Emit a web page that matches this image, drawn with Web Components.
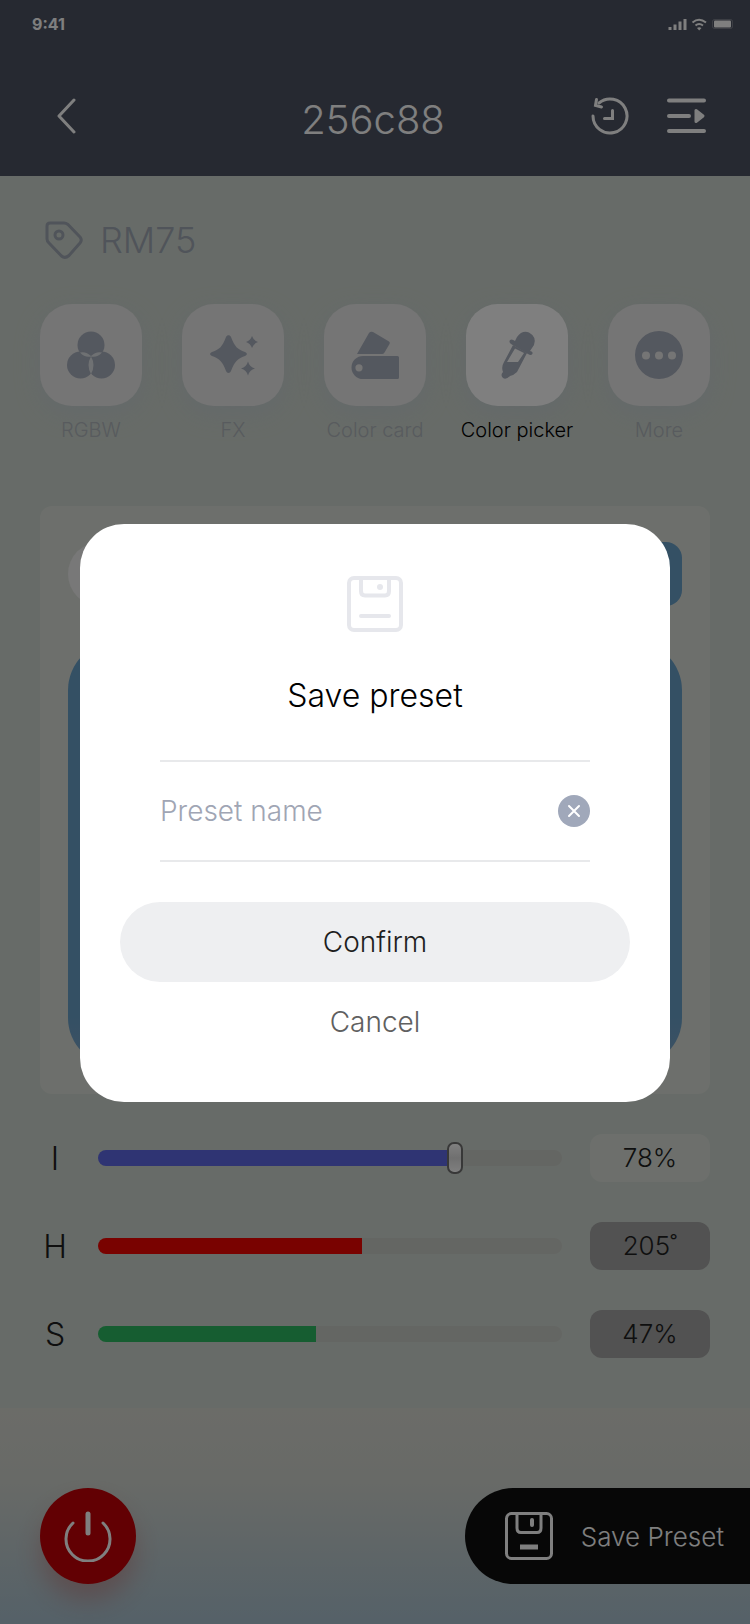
<!DOCTYPE html>
<html lang="en">
<head>
<meta charset="utf-8">
<meta name="viewport" content="width=device-width, initial-scale=1">
<title>Color picker</title>
<style>
  body {
    margin: 0;
    font-family: Inter, "Liberation Sans", sans-serif;
    font-weight: 300;
    color: #1e1e1e;
  }
</style>
</head>
<body>
<light-app>
  <app-header slot="header" time="9:41">256c88</app-header>
  <device-tag>RM75</device-tag>
  <tool-bar>
    <tool-button icon="rgbw">RGBW</tool-button>
    <tool-button icon="fx">FX</tool-button>
    <tool-button icon="card">Color card</tool-button>
    <tool-button icon="picker" active>Color picker</tool-button>
    <tool-button icon="more">More</tool-button>
  </tool-bar>
  <color-panel></color-panel>
  <slider-group>
    <value-slider label="I" value="78" max="100" unit="%" color="#5e68e6" active></value-slider>
    <value-slider label="H" value="205" max="360" unit="˚" color="#f20400"></value-slider>
    <value-slider label="S" value="47" max="100" unit="%" color="#2cba62"></value-slider>
  </slider-group>
  <app-footer slot="footer">Save Preset</app-footer>
  <preset-dialog slot="dialog" placeholder="Preset name">Save preset</preset-dialog>
</light-app>

<script>
const icons = {
  rgbw: `
    <circle cx="24" cy="14" r="13.5"/>
    <circle cx="13.500" cy="34" r="13.500"/>
    <circle cx="34.500" cy="34" r="13.500"/>
    <path d="M13 21.500Q19 20 24 25Q29 20 35 21.500Q30 27 24 25.500Q18 27 13 21.500ZM24 25.500Q29 34 24 43Q19 34 24 25.500Z" fill="#dfe3e6"/>`,
  fx: `
    <path d="M17 6C18 3.500 21 3.500 22 6C26 16 28 18 36 21C38.500 22 38.500 24 36 25C28 28 26 30 22 40C21 42.500 18 42.500 17 40C13 30 11 28 3 25C.5 24 .5 22 3 21C11 18 13 16 17 6Z"/>
    <path d="M43 5Q44.500 9.500 49 11Q44.500 12.500 43 17Q41.500 12.500 37 11Q41.500 9.500 43 5ZM39 30.500Q40.500 36 46 37.500Q40.500 39 39 44.500Q37.500 39 32 37.500Q37.500 36 39 30.500Z"/>`,
  card: `
    <path d="M6 23L18 2Q19.500 0 22 1L38 10.500Q39.500 11.500 38.500 13L33.500 21.500Q32.500 23 31 23Z"/>
    <path fill-rule="evenodd" d="M12 25H46.500Q48 25 48 26.500V46.500Q48 48 46.500 48H12A11.500 11.500 0 0 1 12 25ZM8 33.200A3.600 3.600 0 1 0 8 40.400A3.600 3.600 0 1 0 8 33.200Z"/>`,
  picker: `
    <path d="M24 6Q29-1 36 1.500Q44 6 41 14L37 20Q41 21 39 23.500Q37.500 24.500 35 23L18 13Q15.500 11 17 9Q19 7.500 22 10Z"/>
    <path fill-rule="evenodd" d="M20 14L34 22L24 41Q21 44 17 45Q13 49 10 47Q7 44 10 41Q8 36 11 31ZM22 17.500L14 31H25L31 22Z"/>`,
  more: `
    <path fill-rule="evenodd" d="M24 0A24 24 0 1 0 24 48A24 24 0 1 0 24 0ZM11 20.500A4 4 0 1 1 11 28.500A4 4 0 1 1 11 20.500ZM24 20.500A4 4 0 1 1 24 28.500A4 4 0 1 1 24 20.500ZM37 20.500A4 4 0 1 1 37 28.500A4 4 0 1 1 37 20.500Z"/>`
};

function define(name, render) {
  customElements.define(name, class extends HTMLElement {
    constructor() {
      super();
      this.attachShadow({ mode: "open" });
    }
    connectedCallback() {
      const template = document.createElement("template");
      template.innerHTML = render(this);
      this.shadowRoot.replaceChildren(template.content.cloneNode(true));
    }
  });
}

define("light-app", () => `
  <style>
    :host {
      display: flex;
      flex-direction: column;
      min-height: 100vh;
      position: relative;
      background: #cfd7d0;
    }
    main {
      display: flex;
      flex-direction: column;
      padding: 40px 40px 0;
    }
    footer { margin-top: auto; }
  </style>
  <slot name="header"></slot>
  <main><slot></slot></main>
  <footer><slot name="footer"></slot></footer>
  <slot name="dialog"></slot>
`);

define("app-header", (el) => `
  <style>
    :host { display: block; background: #4c5262; color: #fff; }
    .status {
      display: flex;
      justify-content: space-between;
      align-items: center;
      height: 48px;
      padding: 0 16px 0 32px;
      font-size: 16px;
      font-weight: 700;
    }
    nav {
      display: grid;
      grid-template-columns: 1fr auto 1fr;
      align-items: center;
      height: 120px;
      padding: 8px 44px 0 40px;
    }
    h1 { margin: 8px 0 0; font-size: 40px; line-height: 48px; font-weight: 300; }
    button {
      display: flex;
      padding: 0;
      border: 0;
      background: none;
      color: inherit;
    }
    .back { padding-left: 15px; }
    .actions { display: flex; justify-content: flex-end; gap: 36px; }
    svg { fill: none; stroke: currentColor; stroke-width: 4; }
  </style>
  <header>
    <div class="status">
      <time>${el.getAttribute("time")}</time>
      <svg width="68" height="14" viewBox="0 0 68 14" role="img" aria-label="Signal, Wi-Fi, battery">
        <path d="M4 13V10M9 13V7.500M14 13V4.500M19 13V2" stroke-width="3"/>
        <path d="M26.500 5.500Q33 0 40 5.500M29.500 8.500Q33 5.500 37 8.500" stroke-width="2"/>
        <path d="M31 11Q33 9.500 35.500 11L33.200 13.500Z" fill="currentColor" stroke="none"/>
        <rect x="46.500" y="2.500" width="20" height="9" rx="2" stroke-width="1" opacity=".25"/>
        <rect x="48" y="3.500" width="17" height="7" rx="1" fill="currentColor" stroke="none"/>
      </svg>
    </div>
    <nav>
      <button class="back" aria-label="Back">
        <svg width="24" height="36" viewBox="0 0 24 36">
          <path d="M19 2L4 18L19 34" stroke-width="3" stroke-linecap="round" stroke-linejoin="round"/>
        </svg>
      </button>
      <h1><slot></slot></h1>
      <div class="actions">
        <button aria-label="History">
          <svg width="40" height="40" viewBox="0 0 40 40" stroke-linecap="round">
            <path d="M3 20A17 17 0 1 0 9 7" stroke-width="3"/>
            <path d="M6.500 3.500L5.500 9.500L11.500 11M22.500 14.500V22.500H14.500" stroke-width="3"/>
          </svg>
        </button>
        <button aria-label="Sequence">
          <svg width="40" height="40" viewBox="0 0 40 40" stroke-linecap="round">
            <path d="M3 4.500H38M3 20H23M3 35H38"/>
            <path d="M30 14.500V25.500L37 20Z" fill="currentColor" stroke-width="3" stroke-linejoin="round"/>
          </svg>
        </button>
      </div>
    </nav>
  </header>
`);

define("device-tag", () => `
  <style>
    :host {
      display: flex;
      align-items: center;
      gap: 16px;
      height: 48px;
      padding-left: 4px;
      color: #a0a8b4;
      font-size: 36px;
    }
  </style>
  <svg width="40" height="40" viewBox="0 0 40 40" fill="none" stroke="currentColor" stroke-width="3" stroke-linejoin="round" aria-hidden="true">
    <path d="M6 3H20Q22 3 24 4.500L36 17Q38.500 20 36 23L25 35.500Q21 39 17.500 36L5 23Q3 21 3 19V6Q3 3 6 3Z"/>
    <circle cx="15" cy="15" r="4"/>
  </svg>
  <span><slot></slot></span>
`);

define("tool-bar", () => `
  <style>
    :host { display: flex; justify-content: space-between; margin-top: 40px; }
  </style>
  <slot></slot>
`);

define("tool-button", (el) => `
  <style>
    :host { display: block; width: 102px; }
    button {
      display: flex;
      flex-direction: column;
      align-items: center;
      gap: 12px;
      width: 100%;
      padding: 0;
      border: 0;
      background: none;
      color: #b0b6bc;
      font: inherit;
      font-size: 20px;
      line-height: 24px;
      white-space: nowrap;
    }
    .tile {
      display: grid;
      place-items: center;
      width: 102px;
      height: 102px;
      border-radius: 32px;
      background: #eaeaea;
      box-shadow: 0 8px 24px rgba(190, 204, 224, .35);
      color: #a9b0be;
    }
    :host([active]) button { color: #000; }
    :host([active]) .tile { background: #fff; }
    svg { overflow: visible; }
  </style>
  <button aria-pressed="${el.hasAttribute("active")}">
    <span class="tile">
      <svg width="48" height="48" viewBox="0 0 48 48" fill="currentColor" aria-hidden="true">${icons[el.getAttribute("icon")]}</svg>
    </span>
    <span><slot></slot></span>
  </button>
`);

define("color-panel", () => `
  <style>
    :host {
      display: flex;
      flex-direction: column;
      gap: 36px;
      height: 588px;
      margin-top: 64px;
      padding: 36px 28px 28px;
      box-sizing: border-box;
      border-radius: 12px;
      background: #dbdfd8;
    }
    .top { display: flex; justify-content: space-between; }
    .dot { width: 64px; height: 64px; border-radius: 32px; background: #f0f0f0; }
    .swatch { width: 120px; height: 64px; border-radius: 16px; background: #68a0c8; }
    .preview {
      flex: 1;
      border-radius: 48px;
      background: linear-gradient(#68a0c8 88%, #7ca4c8);
    }
  </style>
  <div class="top">
    <div class="dot"></div>
    <div class="swatch"></div>
  </div>
  <div class="preview"></div>
`);

define("slider-group", () => `
  <style>
    :host { display: flex; flex-direction: column; gap: 40px; margin-top: 40px; }
  </style>
  <slot></slot>
`);

define("value-slider", (el) => {
  const value = el.getAttribute("value");
  const max = el.getAttribute("max");
  const unit = el.getAttribute("unit");
  return `
  <style>
    :host {
      display: flex;
      align-items: center;
      height: 48px;
      --fill: ${value / max * 100}%;
      --color: ${el.getAttribute("color")};
    }
    label { width: 30px; text-align: center; font-size: 32px; }
    input {
      flex: 1;
      min-width: 0;
      height: 32px;
      margin: 0 28px;
      appearance: none;
      background: none;
    }
    input::-webkit-slider-runnable-track {
      height: 16px;
      border-radius: 8px;
      background: linear-gradient(to right, var(--color) var(--fill), #c9ccc6 var(--fill));
    }
    input::-webkit-slider-thumb {
      appearance: none;
      width: 0;
      height: 32px;
      margin-top: -8px;
    }
    :host([active]) input::-webkit-slider-thumb {
      width: 16px;
      box-sizing: border-box;
      border: 2px solid #707070;
      border-radius: 7px;
      background: linear-gradient(#fff, #e0e0e0 50%, #fff);
    }
    output {
      width: 120px;
      border-radius: 12px;
      background: #a4a4a4;
      text-align: center;
      font-size: 26px;
      line-height: 48px;
    }
    :host([active]) output { background: #dadfd9; }
  </style>
  <label for="range">${el.getAttribute("label")}</label>
  <input id="range" type="range" min="0" max="${max}" value="${value}">
  <output for="range">${value}${unit}</output>
`;
});

define("app-footer", () => `
  <style>
    :host {
      display: flex;
      justify-content: space-between;
      align-items: flex-start;
      padding: 80px 0 40px 40px;
      background: linear-gradient(#d7d8d1, #d0d4ce 35%, #aac2d0);
    }
    button { border: 0; color: #fff; font: inherit; }
    .power {
      display: grid;
      place-items: center;
      width: 96px;
      height: 96px;
      padding: 0;
      border-radius: 48px;
      background: #c40006;
      box-shadow: 0 16px 24px rgba(196, 60, 50, .3);
    }
    .save {
      display: flex;
      align-items: center;
      gap: 28px;
      height: 96px;
      padding: 0 26px 0 40px;
      border-radius: 48px 0 0 48px;
      background: #0e0e0e;
      font-size: 26px;
    }
  </style>
  <button class="power" aria-label="Power">
    <svg width="48" height="52" viewBox="0 0 48 52" fill="none" stroke="currentColor" stroke-linecap="round">
      <path d="M9 13A22 22 0 1 0 39 13" stroke-width="3"/>
      <path d="M24 4V23" stroke-width="5"/>
    </svg>
  </button>
  <button class="save">
    <svg width="48" height="48" viewBox="0 0 48 48" fill="none" stroke="currentColor" stroke-width="3" aria-hidden="true">
      <rect x="1.500" y="1.500" width="45" height="45" rx="5"/>
      <path d="M12 2V16Q12 20.500 16 20.500H32Q36 20.500 36 16V2"/>
      <path d="M27 8V13" stroke-width="4" stroke-linecap="round"/>
      <path d="M15 35H33" stroke-width="5"/>
    </svg>
    <span><slot></slot></span>
  </button>
`);

define("preset-dialog", (el) => `
  <style>
    /* dimmed layer over the whole screen */
    :host {
      position: absolute;
      inset: 0;
      display: flex;
      align-items: center;
      padding: 2px 80px 0;
      background: rgba(0, 0, 0, .5);
    }
    form {
      flex: 1;
      display: flex;
      flex-direction: column;
      align-items: center;
      min-width: 0;
      padding: 52px 40px 40px;
      border-radius: 44px;
      background: #fff;
    }
    h2 {
      margin: 40px 0;
      color: #000;
      font-size: 32px;
      line-height: 48px;
      font-weight: 300;
    }
    .field {
      display: flex;
      align-items: center;
      align-self: stretch;
      height: 98px;
      margin: 0 40px;
      border: solid #e8e9eb;
      border-width: 2px 0;
    }
    input {
      flex: 1;
      min-width: 0;
      padding: 0;
      border: 0;
      outline: 0;
      background: none;
      font: inherit;
      font-size: 28px;
    }
    input::placeholder { color: #a0a5b4; opacity: 1; }
    button { padding: 0; border: 0; font: inherit; }
    .clear {
      display: grid;
      width: 32px;
      height: 32px;
      border-radius: 16px;
      background: #a0a8ba;
      color: #fff;
    }
    .confirm, .cancel {
      align-self: stretch;
      height: 80px;
      border-radius: 40px;
      font-size: 28px;
    }
    .confirm { margin-top: 40px; background: #eeeff1; color: #1e1e1e; }
    .cancel { background: none; color: #606060; }
  </style>
  <form role="dialog" aria-modal="true" aria-labelledby="title">
    <svg width="56" height="56" viewBox="0 0 56 56" fill="none" stroke="#e6e7ec" stroke-width="4" stroke-linecap="round" aria-hidden="true">
      <rect x="2" y="2" width="52" height="52" rx="5"/>
      <path d="M14 3V15Q14 19.500 18 19.500H38Q42 19.500 42 15V3M14 40H42"/>
      <circle cx="33" cy="11" r="3" fill="#e6e7ec" stroke="none"/>
    </svg>
    <h2 id="title"><slot></slot></h2>
    <div class="field">
      <input type="text" aria-label="${el.getAttribute("placeholder")}" placeholder="${el.getAttribute("placeholder")}">
      <button class="clear" type="reset" aria-label="Clear">
        <svg width="32" height="32" viewBox="0 0 32 32" fill="none" stroke="currentColor" stroke-width="2" stroke-linecap="round">
          <path d="M11 11L21 21M21 11L11 21"/>
        </svg>
      </button>
    </div>
    <button class="confirm" type="button">Confirm</button>
    <button class="cancel" type="button">Cancel</button>
  </form>
`);
</script>
</body>
</html>
